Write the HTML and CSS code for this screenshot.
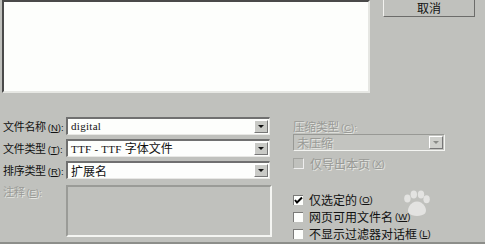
FILE: index.html
```html
<!DOCTYPE html>
<html>
<head>
<meta charset="utf-8">
<link rel="stylesheet" href="styles.css">
</head>
<body>
<div class="dialog">
  <div class="top">
    <div class="listbox"></div>
    <div class="btn">取消</div>
  </div>
  <div class="form">
    <div class="left">
      <div class="row">
        <span class="label">文件名称<span class="key">(<u>N</u>):</span></span>
        <div class="combo"><span class="val mono">digital</span><span class="arrow"><i></i></span></div>
      </div>
      <div class="row">
        <span class="label">文件类型<span class="key">(<u>T</u>):</span></span>
        <div class="combo"><span class="val"><span class="mono">TTF - TTF </span>字体文件</span><span class="arrow"><i></i></span></div>
      </div>
      <div class="row">
        <span class="label">排序类型<span class="key">(<u>R</u>):</span></span>
        <div class="combo"><span class="val">扩展名</span><span class="arrow"><i></i></span></div>
      </div>
      <div class="row notes">
        <span class="label dis">注释<span class="key">(<u>E</u>):</span></span>
        <div class="textarea"></div>
      </div>
    </div>
    <div class="right">
      <div class="dis small">压缩类型<span class="key">(<u>C</u>):</span></div>
      <div class="combo dcombo"><span class="val dis">未压缩</span><span class="arrow"><i></i></span></div>
      <div class="check dis"><span class="box dbox"></span>仅导出本页<span class="key">(<u>X</u>)</span></div>
      <div class="checks">
        <div class="check"><span class="box"><svg width="9" height="9" viewBox="0 0 9 9"><path d="M1 4 L3 6.5 L8 1.5" stroke="#000" stroke-width="2" fill="none"/></svg></span>仅选定的<span class="key">(<u>O</u>)</span></div>
        <div class="check"><span class="box"></span>网页可用文件名<span class="key">(<u>W</u>)</span></div>
        <div class="check"><span class="box"></span>不显示过滤器对话框<span class="key">(<u>L</u>)</span></div>
      </div>
    </div>
  </div>
  <svg class="wm" width="32" height="28" viewBox="0 0 40 34">
    <g fill="rgba(255,255,255,0.55)">
      <ellipse cx="8" cy="10" rx="4" ry="5"/>
      <ellipse cx="16" cy="5" rx="4" ry="5"/>
      <ellipse cx="25" cy="5" rx="4" ry="5"/>
      <ellipse cx="32" cy="11" rx="4" ry="5"/>
      <path d="M20 14 C12 14 6 24 10 29 C14 33 26 33 30 29 C34 24 28 14 20 14 Z"/>
    </g>
  </svg>
</div>
</body>
</html>
```
FILE: styles.css
```css
html, body { margin: 0; padding: 0; }
body {
  width: 485px; height: 244px; overflow: hidden;
  background: #c0c1bd;
  font-family: "Noto Sans CJK SC", "Liberation Sans", sans-serif;
  font-size: 12px; color: #111;
}
.dialog { position: relative; width: 485px; height: 244px; border-bottom: 2px solid #8d8e8a; box-sizing: border-box; }
.top { display: flex; align-items: flex-start; padding-left: 2px; }
.listbox {
  width: 364px; height: 89px; background: #fdfefc;
  border-top: 2px solid #4a4a4a; border-left: 2px solid #4a4a4a;
  border-right: 2px solid #e6e7e3; border-bottom: 2px solid #e6e7e3;
}
.btn {
  margin-left: 13px; width: 90px; height: 16px;
  border-left: 1px solid #f2f2ef; border-right: 1px solid #6c6c6a; border-bottom: 1px solid #6c6c6a;
  text-align: center; line-height: 15px; font-size: 12px; color: #111;
}
.form { display: flex; padding-top: 24px; }
.left { width: 290px; display: flex; flex-direction: column; gap: 5px; padding-left: 3px; }
.row { display: flex; align-items: center; height: 17px; }
.label { width: 63px; white-space: nowrap; font-size: 11px; letter-spacing: -0.3px; }
.key { font-family: "Liberation Sans", sans-serif; font-size: 9.5px; letter-spacing: 0; margin-left: 2px; }
.key u { text-decoration: underline; }
.combo {
  width: 201px; height: 15px; background: #fdfefc; display: flex; align-items: center;
  border-top: 2px solid #707070; border-left: 2px solid #707070;
  border-right: 1px solid #e8e8e5; border-bottom: 1px solid #e8e8e5;
}
.val { flex: 1; padding-left: 3px; font-size: 12px; white-space: nowrap; line-height: 15px; }
.mono { font-family: "Liberation Serif", serif; font-size: 11px; letter-spacing: 0.3px; }
.arrow {
  width: 14px; height: 13px; margin-right: 1px; background: #c9cac6;
  border-left: 1px solid #fff; border-top: 1px solid #fff;
  border-right: 1px solid #777; border-bottom: 1px solid #777; box-sizing: border-box;
  display: flex; align-items: center; justify-content: center;
}
.arrow i { width: 0; height: 0; border-left: 3px solid transparent; border-right: 3px solid transparent; border-top: 3px solid #111; }
.notes { align-items: flex-start; height: 52px; margin-top: 2px; }
.notes .label { margin-top: -2px; }
.textarea {
  width: 202px; height: 48px; background: #c0c1bd;
  border-top: 2px solid #9a9b97; border-left: 2px solid #9a9b97;
  border-right: 2px solid #f4f5f2; border-bottom: 2px solid #f4f5f2;
}
.dis { color: #999a96; text-shadow: 1px 1px 0 #e4e5e1; }
.right { padding-left: 0; padding-top: 2px; }
.small { font-size: 11.5px; line-height: 14px; height: 14px; }
.dcombo { width: 150px; height: 15px; background: #c3c4c0; border-top: 1px solid #989995; border-left: 1px solid #989995; border-right: 1px solid #f4f5f2; border-bottom: 1px solid #f4f5f2; margin-top: 1px; }
.dcombo .arrow { background: #cfd0cc; }
.dcombo .arrow i { border-top-color: #8a8b87; }
.check { display: flex; align-items: center; height: 17px; white-space: nowrap; font-size: 12px; }
.box {
  width: 9px; height: 9px; background: #fdfefc; margin-right: 6px;
  border-top: 1px solid #7a7a78; border-left: 1px solid #7a7a78;
  display: flex; align-items: center; justify-content: center;
}
.dbox { background: #c0c1bd; border: 1px solid #a3a4a0; border-right-color: #eee; border-bottom-color: #eee; }
.check.dis { margin-top: 4px; }
.checks { margin-top: 19px; }
.wm { position: absolute; left: 401px; top: 190px; }
```
